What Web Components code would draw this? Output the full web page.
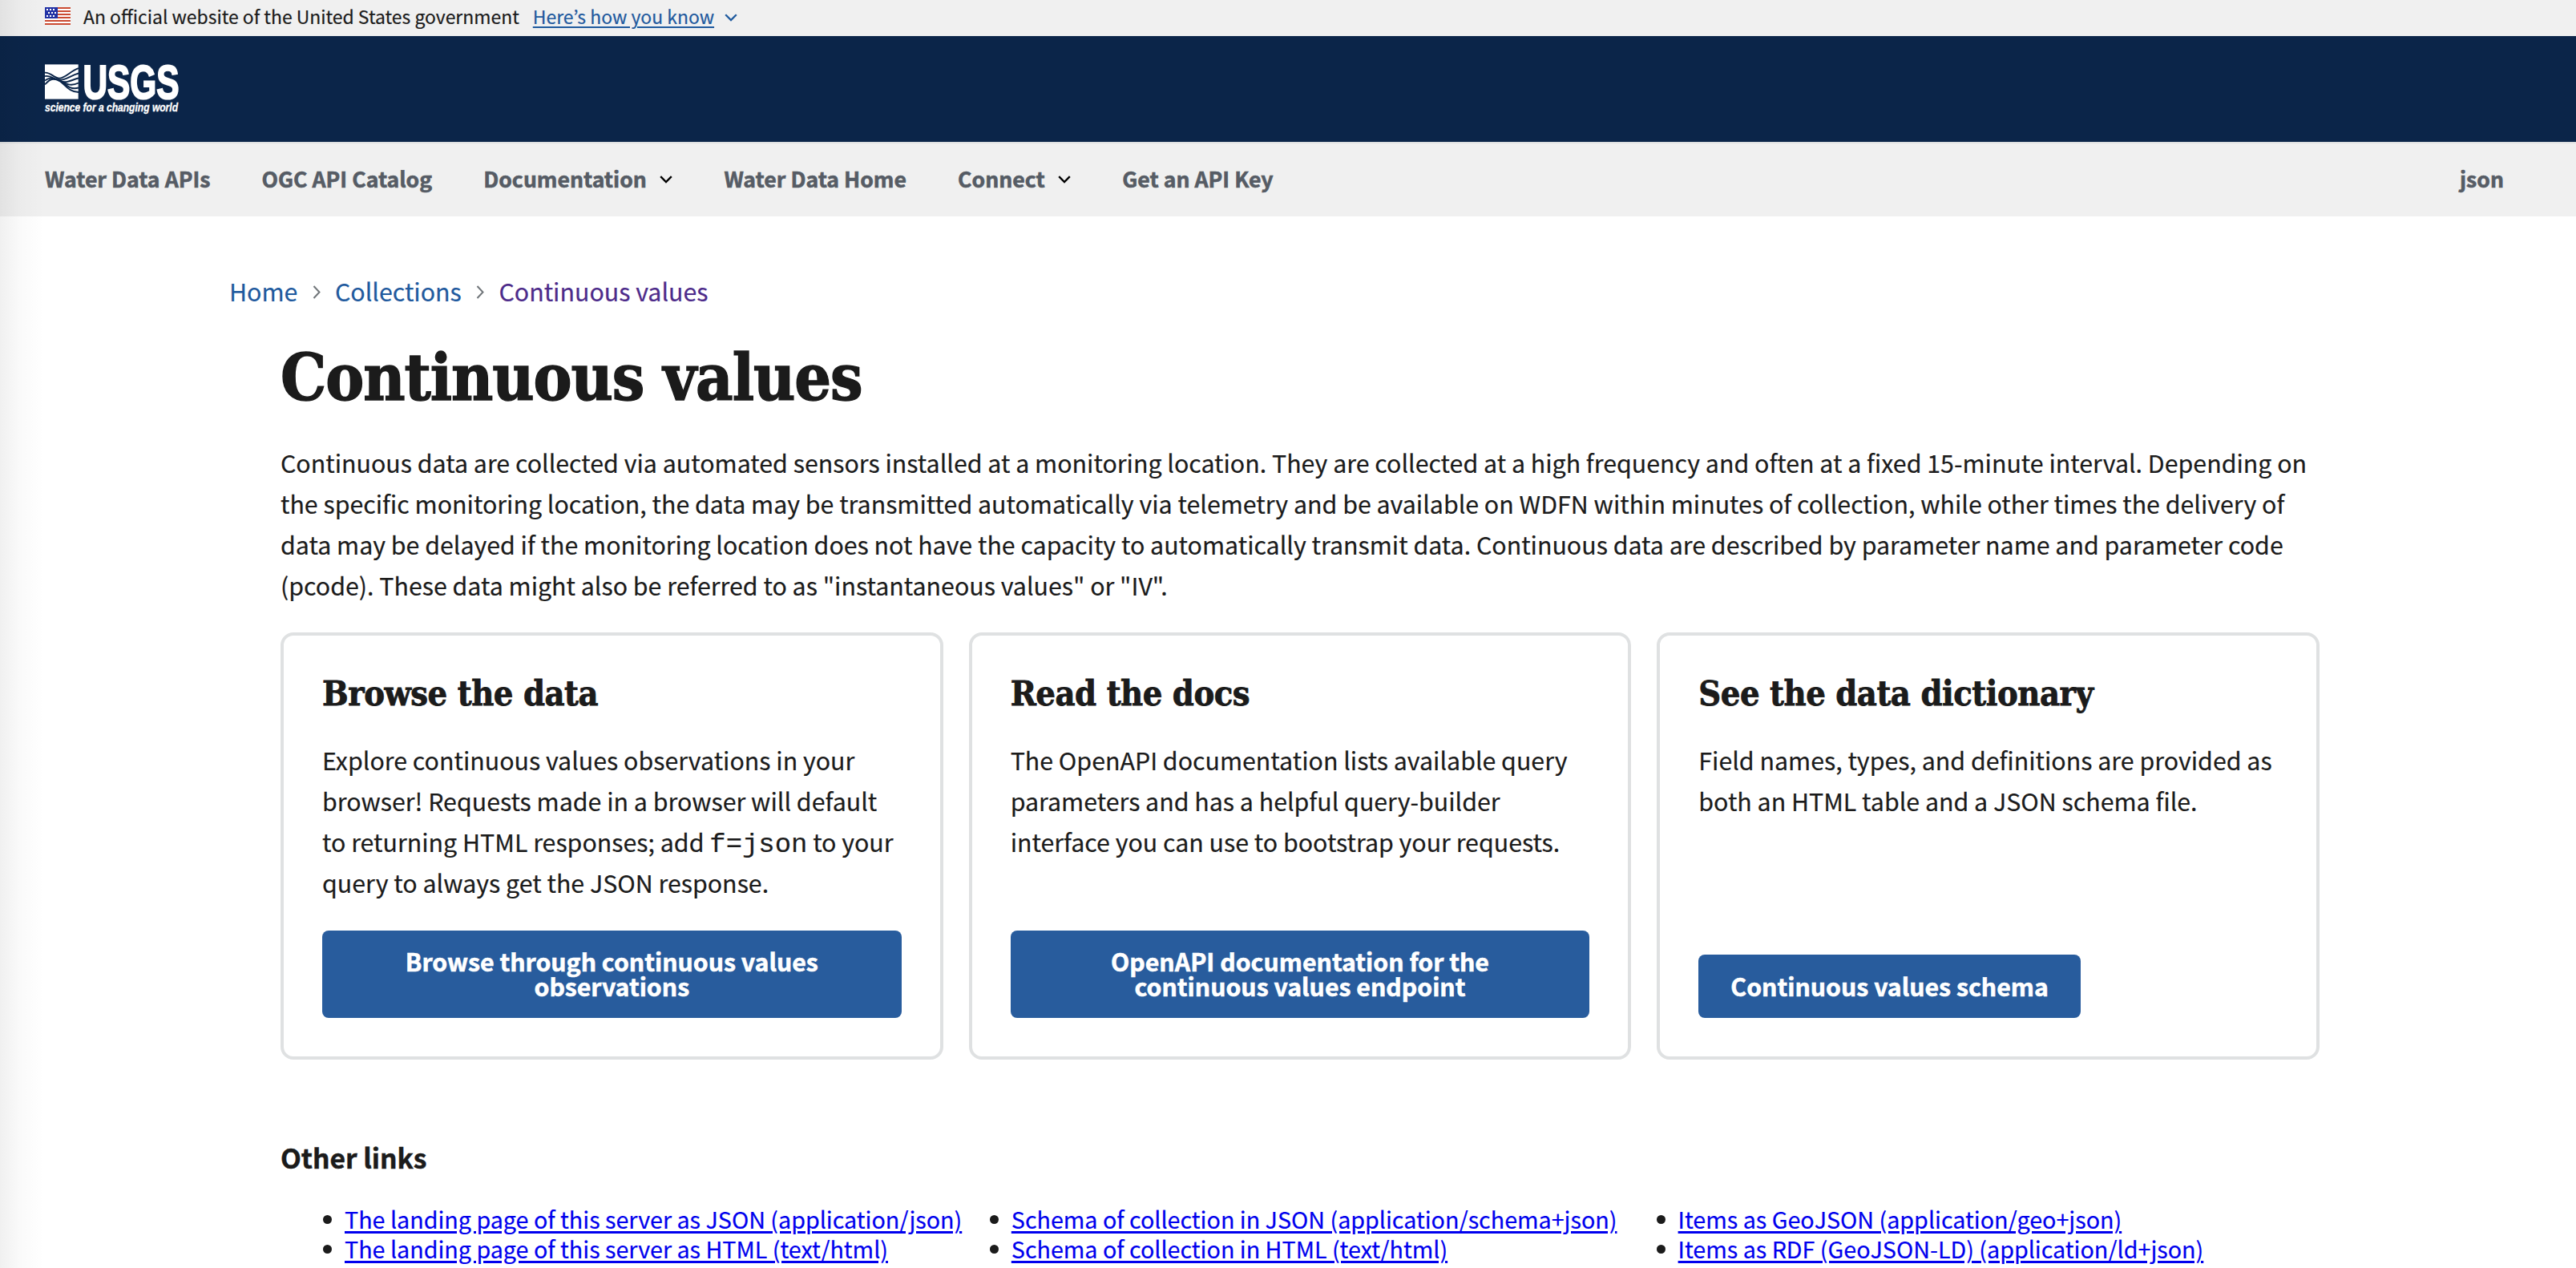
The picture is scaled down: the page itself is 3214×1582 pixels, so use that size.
<!DOCTYPE html>
<html lang="en">
<head>
<meta charset="utf-8">
<title>Continuous values</title>
<style>
    :root {
        --sans: "Noto Sans CJK KR", "Open Sans", sans-serif;
        --serif: "DejaVu Serif Condensed", "DejaVu Serif", serif;
        --ink: #1b1b1b;
        --primary: #285c9d;
        --border: #dfe1e2;
    }
    html, body {
        margin: 0;
        height: 1582px;
        overflow: hidden;
        background: #fff;
    }
    body {
        font-family: var(--sans);
        font-size: 30.35px;
        line-height: 50.88px;
        color: var(--ink);
        -webkit-text-stroke: .2px currentColor;
    }
</style>
</head>
<body>
<api-page>
    <gov-banner></gov-banner>
    <site-header></site-header>
    <site-nav>
        <nav-item>Water Data APIs</nav-item>
        <nav-item>OGC API Catalog</nav-item>
        <nav-item menu>Documentation</nav-item>
        <nav-item>Water Data Home</nav-item>
        <nav-item menu>Connect</nav-item>
        <nav-item>Get an API Key</nav-item>
        <nav-item slot="end">json</nav-item>
    </site-nav>
    <bread-crumbs trail="Home|Collections|Continuous values"></bread-crumbs>
    <collection-intro heading="Continuous values">
        Continuous data are collected via automated sensors installed at a monitoring location. They are collected at a high frequency and often at a fixed 15-minute interval. Depending on<br>
        the specific monitoring location, the data may be transmitted automatically via telemetry and be available on WDFN within minutes of collection, while other times the delivery of<br>
        data may be delayed if the monitoring location does not have the capacity to automatically transmit data. Continuous data are described by parameter name and parameter code<br>
        (pcode). These data might also be referred to as "instantaneous values" or "IV".
    </collection-intro>
    <card-group>
        <link-card heading="Browse the data">
            Explore continuous values observations in your<br>browser! Requests made in a browser will default<br>to returning HTML responses; add <code-text>f=json</code-text> to your<br>query to always get the JSON response.
            <span slot="action">Browse through continuous values<br>observations</span>
        </link-card>
        <link-card heading="Read the docs">
            The OpenAPI documentation lists available query<br>parameters and has a helpful query-builder<br>interface you can use to bootstrap your requests.
            <span slot="action">OpenAPI documentation for the<br>continuous values endpoint</span>
        </link-card>
        <link-card heading="See the data dictionary" compact>
            Field names, types, and definitions are provided as<br>both an HTML table and a JSON schema file.
            <span slot="action">Continuous values schema</span>
        </link-card>
    </card-group>
    <other-links heading="Other links"></other-links>
</api-page>

<script>
const otherLinks = [
    "The landing page of this server as JSON (application/json)",
    "Schema of collection in JSON (application/schema+json)",
    "Items as GeoJSON (application/geo+json)",
    "The landing page of this server as HTML (text/html)",
    "Schema of collection in HTML (text/html)",
    "Items as RDF (GeoJSON-LD) (application/ld+json)"
];

class BaseElement extends HTMLElement {
    constructor() {
        super();
        this.attachShadow({ mode: 'open' });
    }

    connectedCallback() {
        this.shadowRoot.innerHTML = this.render();
    }
}

class ApiPage extends BaseElement {
    render() {
        return `
            <style>
                :host { display: flex; flex-direction: column; position: relative; height: 1582px; overflow: hidden; }
                /* soft shade along the window edge */
                .shade {
                    position: absolute;
                    inset: 0 auto 0 0;
                    width: 56px;
                    background: linear-gradient(to right, rgba(0,0,0,.06), rgba(0,0,0,.02) 45%, rgba(0,0,0,0));
                }
            </style>
            <slot></slot>
            <div class="shade"></div>
        `;
    }
}

class GovBanner extends BaseElement {
    render() {
        return `
            <style>
                :host {
                    display: flex;
                    align-items: center;
                    box-sizing: border-box;
                    height: 45px;
                    padding: 0 56px 5px;
                    background: #f0f0f0;
                    font-size: 22.93px;
                    line-height: 38px;
                    white-space: nowrap;
                }
                .flag { width: 32px; height: 22px; margin-right: 16px; }
                .chevron { margin-top: 4px; }
                a { color: #1f5a9e; margin: 0 13px 0 17px; text-decoration: underline; text-decoration-thickness: 2px; text-underline-offset: 3px; }
            </style>
            <svg class="flag" viewBox="0 0 32 22">
                <rect width="32" height="22" fill="#fff"/>
                <path d="M0 1h32M0 5h32M0 9h32M0 13h32M0 17h32M0 21h32" stroke="#cb4b32" stroke-width="2"/>
                <rect width="16" height="14" fill="#2232a5"/>
                <path d="M2 3h12M2 11h12" stroke="#fff" stroke-width="2" stroke-dasharray="2 2"/>
                <path d="M4 7h12" stroke="#fff" stroke-width="2" stroke-dasharray="2 2"/>
            </svg>
            <span>An official website of the United States government</span>
            <a>Here’s how you know</a>
            <svg class="chevron" width="16" height="10" viewBox="0 0 16 10"><path d="M1.2 1.2 8 8l6.8-6.8" fill="none" stroke="#1f5a9e" stroke-width="2.3"/></svg>
        `;
    }
}

class SiteHeader extends BaseElement {
    render() {
        return `
            <style>
                :host { display: flex; align-items: flex-start; box-sizing: border-box; height: 132px; padding: 33px 56px; background: #0b2549; }
                svg { display: block; overflow: visible; }
            </style>
            <svg width="168" height="66" viewBox="0 0 168 66" fill="#fff">
                <rect y="2.4" width="41.7" height="43.2"/>
                <g fill="none" stroke="#0b2549" stroke-width="1.9">
                    <path d="M0 12.6c7-.6 11 6.4 18 7.2C26 19 32 10.5 42 7.2"/>
                    <path d="M0 17.2c6-2 10 3.5 18 4.6C27 22 32 16 42 13.5"/>
                    <path d="M0 22.4c6-4.5 11-2.8 18 .4C28 27 34 21 42 19.5"/>
                    <path d="M0 27.4c5-5 8-7.4 13-6.4"/>
                    <path d="M16 21c8 4 14 10 26 4.5"/>
                    <path d="M16 21c8 4 14 14 26 10.5"/>
                    <path d="M17 22c8 5 13 15 25 15"/>
                </g>
                <text x="47.500" y="45" font-family="Liberation Sans Narrow, Liberation Sans" font-weight="700" font-size="60" stroke="#fff" stroke-width="2.2" textLength="120" lengthAdjust="spacingAndGlyphs">USGS</text>
                <text x="0" y="60.5" font-family="Liberation Sans Narrow, Liberation Sans" font-weight="700" font-style="italic" font-size="14.5" stroke="#fff" stroke-width=".3" textLength="166" lengthAdjust="spacingAndGlyphs">science for a changing world</text>
            </svg>
        `;
    }
}

class SiteNav extends BaseElement {
    render() {
        return `
            <style>
                :host {
                    display: flex;
                    justify-content: space-between;
                    box-sizing: border-box;
                    height: 93px;
                    padding: 20px 90px 0 56px;
                    border-top: 2px solid var(--border);
                    background: #f0f0f0;
                }
                div { display: flex; gap: 64px; }
            </style>
            <div><slot></slot></div>
            <slot name="end"></slot>
        `;
    }
}

class NavItem extends BaseElement {
    render() {
        const chevron = `<svg width="16" height="10" viewBox="0 0 16 10"><path d="M1.2 1.2 8 8l6.8-6.8" fill="none" stroke="#000" stroke-width="2.4"/></svg>`;
        return `
            <style>
                :host { display: flex; align-items: center; gap: 16.5px; height: 48px; font-size: 26.63px; font-weight: 700; color: #565c65; white-space: nowrap; -webkit-text-stroke: .6px #565c65; }
                svg { margin-top: 2px; }
            </style>
            <slot></slot>${this.hasAttribute('menu') ? chevron : ''}
        `;
    }
}

class BreadCrumbs extends BaseElement {
    render() {
        const items = this.getAttribute('trail').split('|');
        const sep = `<svg width="10" height="17" viewBox="0 0 10 17"><path d="M1.5 1 8.5 8.5l-7 7.5" fill="none" stroke="#71767a" stroke-width="2"/></svg>`;
        return `
            <style>
                :host { display: flex; align-items: center; gap: 18.3px; padding: 67.5px 286px 0; color: #1f5a9e; white-space: nowrap; -webkit-text-stroke: .2px; }
                svg { margin-top: 4px; }
                a:last-child { color: #4d2b8a; }
            </style>
            ${items.map(item => `<a>${item}</a>`).join(sep)}
        `;
    }
}

class CollectionIntro extends BaseElement {
    render() {
        return `
            <style>
                :host { display: block; padding: 32.5px 320px 0 350px; white-space: nowrap; }
                h1 { margin: 0 0 31px; font: 700 80px/100px var(--serif); letter-spacing: -1.05px; -webkit-text-stroke: 1.4px var(--ink); }
                p { margin: 0; }
            </style>
            <h1>${this.getAttribute('heading')}</h1>
            <p><slot></slot></p>
        `;
    }
}

class CardGroup extends BaseElement {
    render() {
        return `
            <style>
                :host { display: grid; grid-template-columns: repeat(3, minmax(0, 1fr)); gap: 32px; height: 533px; margin: 33.6px 320px 0 350px; }
            </style>
            <slot></slot>
        `;
    }
}

class LinkCard extends BaseElement {
    render() {
        return `
            <style>
                :host {
                    display: flex;
                    flex-direction: column;
                    box-sizing: border-box;
                    padding: 45px 48px 48px;
                    border: 4px solid var(--border);
                    border-radius: 16px;
                    white-space: nowrap;
                }
                h2 { margin: 0 0 31px; font: 700 43px/54px var(--serif); letter-spacing: -.47px; -webkit-text-stroke: .8px var(--ink); }
                p { margin: 0; }
                .button {
                    margin-top: auto;
                    padding: 23.5px 40px 24.5px;
                    border-radius: 8px;
                    background: var(--primary);
                    color: #fff;
                    font-size: 30.25px;
                    font-weight: 700;
                    line-height: 30.5px;
                    text-align: center;
                    -webkit-text-stroke: .6px #fff;
                }
                :host([compact]) .button { align-self: flex-start; }
            </style>
            <h2>${this.getAttribute('heading')}</h2>
            <p><slot></slot></p>
            <a class="button"><slot name="action"></slot></a>
        `;
    }
}

class CodeText extends BaseElement {
    render() {
        return `<style>
                :host { display: inline; font-family: "Liberation Mono", monospace; font-size: 33.9px; line-height: 0; }
            </style><slot></slot>`;
    }
}

class OtherLinks extends BaseElement {
    render() {
        return `
            <style>
                :host { display: block; padding: 97px 320px 0 350px; white-space: nowrap; }
                h3 { margin: 0 0 33.5px; font-size: 33.6px; line-height: 50px; -webkit-text-stroke: .5px var(--ink); }
                ul { display: grid; grid-template-columns: repeat(3, 831.8px); margin: 0; padding-left: 53px; list-style: none; font-size: 28.68px; line-height: 37px; }
                li { display: flex; align-items: center; gap: 16px; }
                li::before { content: ""; flex: none; width: 11px; height: 11px; margin-top: 2px; border-radius: 50%; background: var(--ink); }
                a { color: #0000ee; text-decoration: underline; text-decoration-thickness: 2.5px; text-underline-offset: 3px; -webkit-text-stroke: .2px #0000ee; }
            </style>
            <h3>${this.getAttribute('heading')}</h3>
            <ul>${otherLinks.map(text => `<li><a>${text}</a></li>`).join('')}</ul>
        `;
    }
}

customElements.define('api-page', ApiPage);
customElements.define('gov-banner', GovBanner);
customElements.define('site-header', SiteHeader);
customElements.define('site-nav', SiteNav);
customElements.define('nav-item', NavItem);
customElements.define('bread-crumbs', BreadCrumbs);
customElements.define('collection-intro', CollectionIntro);
customElements.define('card-group', CardGroup);
customElements.define('link-card', LinkCard);
customElements.define('code-text', CodeText);
customElements.define('other-links', OtherLinks);
</script>
</body>
</html>
